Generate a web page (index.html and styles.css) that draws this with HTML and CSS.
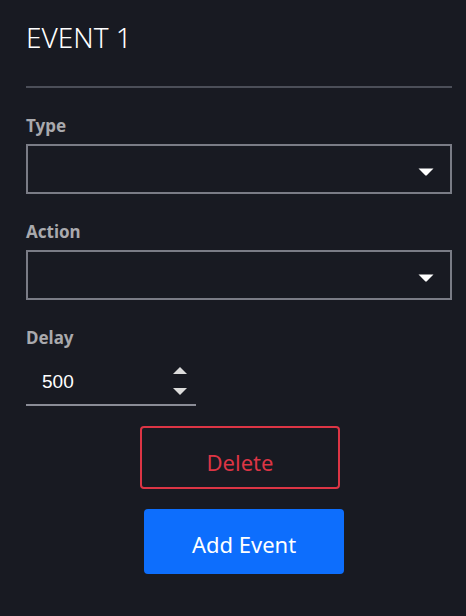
FILE: index.html
```html
<!DOCTYPE html>
<html lang="en">
<head>
    <meta charset="UTF-8">
    <meta name="viewport" content="width=device-width, initial-scale=1.0">
    <title>Event Editor</title>
    <link rel="stylesheet" href="styles.css">
</head>
<body>
    <div class="event-panel">
        <h2 class="event-title">EVENT 1</h2>
        <hr class="divider">

        <div class="field">
            <label class="field-label" for="typeSelect">Type</label>
            <div class="select-box">
                <select id="typeSelect"></select>
                <svg class="select-arrow" width="16" height="8" viewBox="0 0 16 8">
                    <path d="M0.5 0.5 H15.5 L8.8 7.3 Q8 8 7.2 7.3 Z" fill="#fff"/>
                </svg>
            </div>
        </div>

        <div class="field">
            <label class="field-label" for="actionSelect">Action</label>
            <div class="select-box">
                <select id="actionSelect"></select>
                <svg class="select-arrow" width="16" height="8" viewBox="0 0 16 8">
                    <path d="M0.5 0.5 H15.5 L8.8 7.3 Q8 8 7.2 7.3 Z" fill="#fff"/>
                </svg>
            </div>
        </div>

        <div class="field">
            <label class="field-label" for="delayInput">Delay</label>
            <div class="number-box">
                <input id="delayInput" type="number" value="500" step="100">
                <div class="spinner">
                    <svg width="14" height="7" viewBox="0 0 14 7"><path d="M7 0 L14 7 H0 Z" fill="#dcdcdc"/></svg>
                    <svg width="14" height="7" viewBox="0 0 14 7"><path d="M0 0 H14 L7 7 Z" fill="#dcdcdc"/></svg>
                </div>
            </div>
        </div>

        <div class="actions">
            <button class="btn btn-delete">Delete</button>
            <button class="btn btn-add">Add Event</button>
        </div>
    </div>
</body>
</html>
```

FILE: styles.css
```css
body {
    margin: 0;
    background-color: #181a22;
    font-family: "Noto Sans", "Open Sans", sans-serif;
    color: #fff;
}

.event-panel {
    padding: 21px 14px 0 26px;
}

.event-title {
    margin: 0;
    font-size: 28px;
    font-weight: 300;
    line-height: 32px;
    color: #fff;
}

.divider {
    height: 2px;
    margin: 33px 0 0;
    border: 0;
    background: #4b4e58;
}

.field {
    margin-top: 28px;
}

.field-label {
    display: block;
    font-size: 17px;
    font-weight: 700;
    line-height: 20px;
    color: #a9a9ad;
}

.select-box {
    position: relative;
    height: 50px;
    margin-top: 8px;
    border: 2px solid #7a7c86;
    box-sizing: border-box;
}

.select-box select {
    -webkit-appearance: none;
    appearance: none;
    width: 100%;
    height: 100%;
    background: transparent;
    border: none;
    outline: none;
    color: #fff;
}

.select-arrow {
    position: absolute;
    right: 16px;
    top: 22px;
    pointer-events: none;
}

.number-box {
    display: flex;
    align-items: center;
    width: 170px;
    height: 46px;
    margin-top: 12px;
    padding: 0 9px 0 16px;
    border-bottom: 2px solid #8a8c96;
    box-sizing: border-box;
}

.number-box input {
    flex: 1;
    min-width: 0;
    background: transparent;
    border: none;
    outline: none;
    padding: 0;
    color: #fff;
    font-family: "Liberation Sans", Arial, sans-serif;
    font-size: 19px;
    -moz-appearance: textfield;
}

.number-box input::-webkit-outer-spin-button,
.number-box input::-webkit-inner-spin-button {
    -webkit-appearance: none;
    margin: 0;
}

.spinner {
    display: flex;
    flex-direction: column;
    gap: 14px;
    margin-top: -2px;
}

.spinner svg {
    display: block;
}

.actions {
    display: flex;
    flex-direction: column;
    align-items: center;
    gap: 20px;
    margin-top: 20px;
    padding-left: 2px;
}

.btn {
    width: 200px;
    font-family: "Noto Sans", "Open Sans", sans-serif;
    font-size: 22px;
    border-radius: 4px;
    cursor: pointer;
}

.btn-delete {
    height: 63px;
    padding: 8px 0 0;
    background: transparent;
    border: 2px solid #dc3545;
    color: #dc3545;
}

.btn-add {
    height: 65px;
    margin-left: 8px;
    padding: 4px 0 0;
    background: #0d6efd;
    border: none;
    color: #fff;
}
```
